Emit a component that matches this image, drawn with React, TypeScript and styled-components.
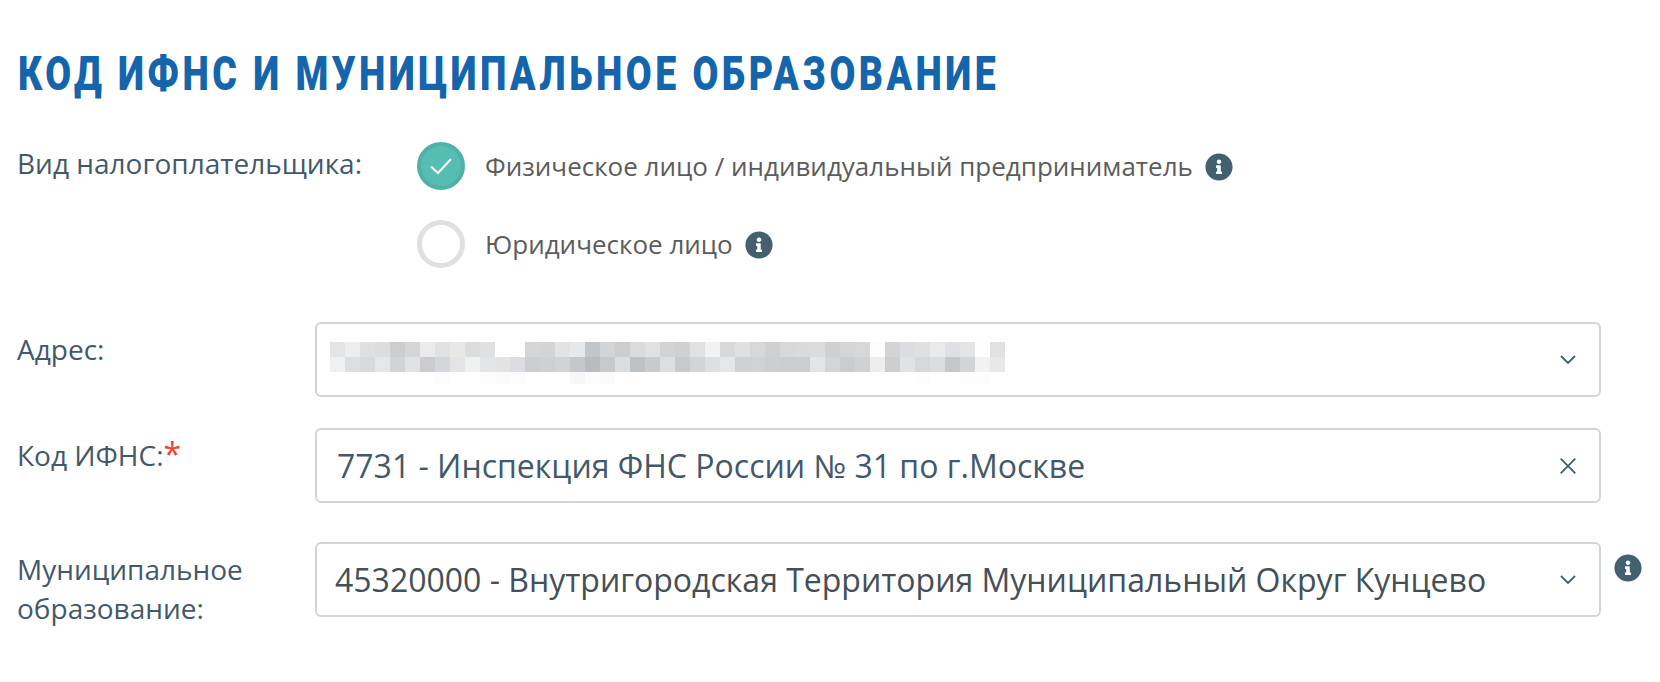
import React from 'react';
import styled, { createGlobalStyle } from 'styled-components';
import { FaInfoCircle } from 'react-icons/fa';

const GlobalStyle = createGlobalStyle`
    html, body {
        margin: 0;
        background: #fff;
    }
    body {
        font-family: "Open Sans", "Liberation Sans", sans-serif;
    }
`;

const Page = styled.div`
    width: 1660px;
    height: 682px;
    padding: 47px 59px 0 18px;
    box-sizing: border-box;
    overflow: hidden;
`;

// no condensed DIN here, so the bold face is squeezed sideways
const Title = styled.h1`
    margin: 0 0 41px;
    font-family: "Roboto", "Liberation Sans", sans-serif;
    font-size: 48px;
    line-height: 54px;
    font-weight: 900;
    letter-spacing: 4.5px;
    color: #1565ad;
    white-space: nowrap;
    transform: scaleX(0.78);
    transform-origin: left center;
`;

const TaxpayerRow = styled.div`
    display: grid;
    grid-template-columns: 399px 1fr;
    margin-bottom: 54px;
`;

const Label = styled.div<{ $top?: number }>`
    font-size: 28px;
    line-height: 39px;
    color: #43596a;
    margin-left: -1px;
    padding-top: ${p => p.$top ?? 0}px;
`;

const Options = styled.div`
    display: flex;
    flex-direction: column;
    gap: 30px;
`;

const Option = styled.div`
    display: flex;
    align-items: center;
    height: 48px;
    font-size: 26px;
    color: #5c5c5c;
`;

const Radio = styled.span<{ $checked?: boolean }>`
    width: 48px;
    height: 48px;
    box-sizing: border-box;
    flex: none;
    margin-right: 20px;
    border-radius: 50%;
    display: flex;
    align-items: center;
    justify-content: center;
    border: ${p => (p.$checked ? '4px solid #4fb1a7' : '5px solid #e0e0e0')};
    background: ${p => (p.$checked ? '#56bdb3' : '#fff')};
`;

const Info = styled(FaInfoCircle)<{ $left?: number; $top?: number }>`
    flex: none;
    width: 28px;
    height: 28px;
    margin-left: ${p => p.$left ?? 12}px;
    margin-top: ${p => p.$top ?? 0}px;
    color: #43606f;
`;

const FieldRow = styled.div<{ $after?: number }>`
    display: grid;
    grid-template-columns: 297px 1286px 1fr;
    margin-bottom: ${p => p.$after ?? 0}px;
`;

const Box = styled.div<{ $pad?: number; $color?: string }>`
    height: 75px;
    box-sizing: border-box;
    display: flex;
    align-items: center;
    justify-content: space-between;
    padding: 0 23px 0 ${p => p.$pad ?? 20}px;
    border: 2px solid #d0d5da;
    border-radius: 6px;
    font-size: 32px;
    color: ${p => p.$color ?? '#43596a'};
    white-space: nowrap;
`;

const SideInfo = styled.div`
    padding-top: 12px;
`;

const Required = styled.span`
    font-size: 32px;
    line-height: 0;
    color: #f44336;
`;

const Blur = styled.svg`
    display: block;
    flex: none;
    margin-top: 7px;
`;

const row1 = 'e4e5e7 ecedec dfe0e1 dcdddf cccdcf d4d5d7 ebebeb e1e2e4 e8e8e7 dbdcde dfe0e2 ffffff ffffff d5d6d8 d3d4d6 e2e3e5 e7e8ea c1c6ca d3d4d6 cbcdcf dadbdd e0e1e2 d2d3d5 cfd0d2 e0e1e3 f1f2f4 d8d9db dfe0e2 d6d7d9 ced0d2 d7d8da d9dadc dadbdd cfd0d2 d4d5d7 d6d7d9 fdfdfd d3d4d6 dcdde0 dfe0e2 e9eaec dfe0e3 e3e4e6 fefefe e0e1e3'.split(' ');
const row2 = 'eff0f2 dddee0 d9dadc e6e6e6 d2d3d5 e1e2e4 cbcccf d5d6d9 e3e4e6 eff1f0 e4e5e7 e2e3e5 dcdde0 cccdd0 ced0d2 d2d3d5 c5c7ca b9bbbe c6c8ca dcdde0 bcc2c6 c8cacb dddee0 c8c9cb d3d4d6 dedfe1 e5e6e8 d0d1d3 d1d2d4 cdced0 cccdcf cccdcf e3e4e6 d4d5d7 cbccce d0d1d3 ededed ccced0 e1e2e4 d6d7d9 dbdcde c6c7c9 d3d4d6 f1f3f2 e8e8e8'.split(' ');
const row3: Record<number, string> = { 7: 'fcfcfc', 10: 'fcfcfc', 11: 'fafafa', 12: 'fcfcfc', 16: 'f7f7f7', 17: 'fdfdfd', 18: 'fbfbfb', 39: 'fdfdfd', 42: 'fdfdfd', 43: 'fdfdfd' };

// the address is pixelated in the picture
function BlurredAddress() {
    return (
        <Blur width={675} height={42} shapeRendering="crispEdges">
            {row1.map((c, i) => <rect key={'a' + i} x={i * 15} y={0} width={15} height={15} fill={'#' + c} />)}
            {row2.map((c, i) => <rect key={'b' + i} x={i * 15} y={15} width={15} height={15} fill={'#' + c} />)}
            {Object.keys(row3).map(k => (
                <rect key={'c' + k} x={Number(k) * 15} y={30} width={15} height={12} fill={'#' + row3[Number(k)]} />
            ))}
        </Blur>
    );
}

const Chevron = () => (
    <svg width="16" height="9" viewBox="0 0 16 9" fill="none" stroke="#43606f" strokeWidth="1.8">
        <path d="M1 1l7 7 7-7" />
    </svg>
);

const Close = () => (
    <svg width="16" height="16" viewBox="0 0 16 16" fill="none" stroke="#43606f" strokeWidth="1.8">
        <path d="M.7.7l14.6 14.6M15.3.7L.7 15.3" />
    </svg>
);

const Check = () => (
    <svg width="22" height="18" viewBox="0 0 22 18" fill="none" stroke="#fff" strokeWidth="2">
        <path d="M1 9.5l7 6.5L21 2" />
    </svg>
);

export default function App() {
    return (
        <Page>
            <GlobalStyle />
            <Title>КОД ИФНС И МУНИЦИПАЛЬНОЕ ОБРАЗОВАНИЕ</Title>
            <TaxpayerRow>
                <Label $top={2}>Вид налогоплательщика:</Label>
                <Options>
                    <Option>
                        <Radio $checked><Check /></Radio>
                        Физическое лицо / индивидуальный предприниматель
                        <Info $top={2} />
                    </Option>
                    <Option>
                        <Radio />
                        Юридическое лицо
                        <Info $top={2} />
                    </Option>
                </Options>
            </TaxpayerRow>
            <FieldRow $after={31}>
                <Label $top={8}>Адрес:</Label>
                <Box $pad={13}>
                    <BlurredAddress />
                    <Chevron />
                </Box>
            </FieldRow>
            <FieldRow $after={39}>
                <Label $top={8}>Код ИФНС:<Required>*</Required></Label>
                <Box>
                    7731 - Инспекция ФНС России № 31 по г.Москве
                    <Close />
                </Box>
            </FieldRow>
            <FieldRow>
                <Label $top={8}>Муниципальное<br />образование:</Label>
                <Box $pad={18} $color="#444f58">
                    45320000 - Внутригородская Территория Муниципальный Округ Кунцево
                    <Chevron />
                </Box>
                <SideInfo><Info $left={13} /></SideInfo>
            </FieldRow>
        </Page>
    );
}
